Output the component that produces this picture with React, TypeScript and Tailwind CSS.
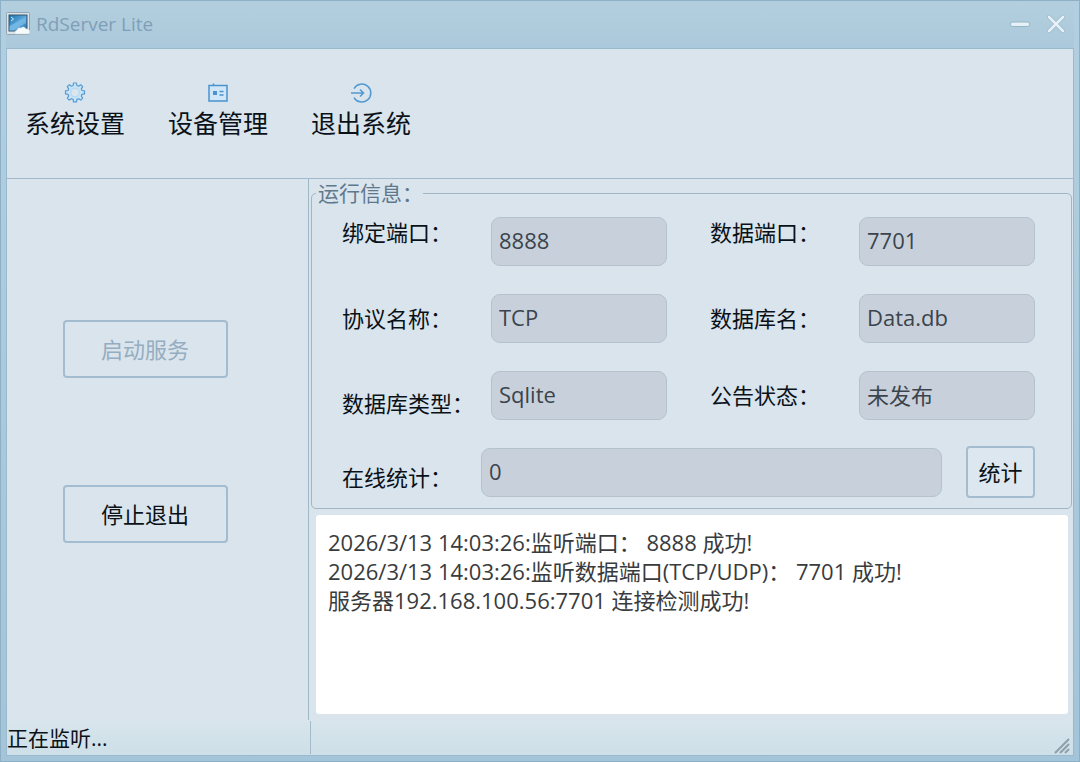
import type { ReactNode } from "react";

const ACTIONS: { label: string; icon: ReactNode }[] = [
  { label: "系统设置", icon: <GearIcon /> },
  { label: "设备管理", icon: <DeviceIcon /> },
  { label: "退出系统", icon: <ExitIcon /> },
];

const LOG = [
  "2026/3/13 14:03:26:监听端口： 8888 成功!",
  "2026/3/13 14:03:26:监听数据端口(TCP/UDP)： 7701 成功!",
  "服务器192.168.100.56:7701 连接检测成功!",
].join("\n");

function AppIcon() {
  return (
    <svg width="25" height="25" viewBox="0 0 25 25" aria-hidden="true">
      <defs>
        <linearGradient id="screen" x1="0" y1="0" x2="1" y2="1">
          <stop offset="0" stopColor="#1d6ea8" />
          <stop offset="0.5" stopColor="#58a6dc" />
          <stop offset="1" stopColor="#2473b2" />
        </linearGradient>
      </defs>
      <rect x="0.5" y="1.5" width="23" height="22" rx="1" fill="#dce4e9" stroke="#91a6b2" />
      <rect x="3" y="4" width="18" height="16" fill="url(#screen)" stroke="#34566e" />
      <path d="M3.5 15L20 6v6L8 19.500H3.500z" fill="#8cc9ef" opacity="0.55" />
      <path d="M5 6l2.500 2-2.500 2" fill="none" stroke="#d8f1ff" />
      <path d="M9 23a3 3 0 0 1 2-4 3 3 0 0 1 4-2 3 3 0 0 1 5 1 3 3 0 0 1 3 5z" fill="#f5fafc" stroke="#c2d1da" strokeWidth="0.5" />
    </svg>
  );
}

function GearIcon() {
  return (
    <svg width="22" height="22" viewBox="0 0 22 22" fill="#c9e4f7" stroke="#569bd3" strokeWidth="1.2" strokeLinejoin="round" aria-hidden="true">
      <path
        fillRule="evenodd"
        d="M9.5 1h3l.4 2.5 1.7.7 2.1-1.5 2 2-1.4 2.1.7 1.7 2.5.4v3l-2.5.4-.7 1.7 1.4 2.1-2 2-2.1-1.4-1.7.7-.4 2.5h-3l-.4-2.5-1.7-.7-2.1 1.4-2-2 1.4-2.1-.7-1.7-2.5-.4v-3l2.5-.4.7-1.7-1.4-2.1 2-2 2.1 1.5 1.7-.7z"
      />
      <circle cx="11" cy="10.5" r="4.3" fill="#dae5ed" stroke="#b5d8f0" />
    </svg>
  );
}

function DeviceIcon() {
  return (
    <svg width="22" height="22" viewBox="0 0 22 22" fill="none" stroke="#4b93ce" strokeWidth="1.5" aria-hidden="true">
      <path d="M2 3.500h18v15.500h-18z" fill="#cfe7f8" />
      <path d="M6.500 1.500v2" />
      <rect x="6" y="9" width="4" height="4" fill="#4b93ce" stroke="none" />
      <path d="M12.500 9.500h4M12.500 13h4" />
    </svg>
  );
}

function ExitIcon() {
  return (
    <svg width="22" height="22" viewBox="0 0 22 22" fill="none" stroke="#5199d2" strokeWidth="1.5" aria-hidden="true">
      <path d="M4 6.5A9 9 0 1 1 4 15.5" />
      <path d="M1 11h12.5M10 7.5l3.5 3.5-3.5 3.5" />
    </svg>
  );
}

function Field({
  id,
  label,
  value,
  align = "self-center",
}: {
  id: string;
  label: string;
  value: string;
  align?: string;
}) {
  return (
    <div className="flex min-w-0 flex-1">
      <label htmlFor={id} className={`w-[149px] shrink-0 whitespace-nowrap pb-[2px] leading-[30px] ${align}`}>
        {label}
      </label>
      <ReadOnlyInput id={id} value={value} />
    </div>
  );
}

function ReadOnlyInput({ id, value }: { id: string; value: string }) {
  return (
    <input
      id={id}
      readOnly
      value={value}
      className="h-[49px] w-full min-w-0 flex-1 rounded-[9px] border border-[#b4c2ce] bg-[#c8d1db] px-[7px] pb-1 text-[22px] text-[#3b444c] outline-none"
    />
  );
}

export default function App() {
  return (
    <div className="flex min-h-screen flex-col border border-[#8db0c6] bg-linear-to-b from-[#b1cfe0] to-[#a4c4d9] px-[5px] pb-[5px] font-['Open_Sans','Noto_Sans_CJK_SC',sans-serif] text-[22px] text-[#0b1118]">
      <header className="flex h-[47px] shrink-0 items-center bg-linear-to-b from-[#b3cfde] to-[#abc9dc] pb-[2px]">
        <AppIcon />
        <h1 className="ml-[5px] flex-1 text-[19px] leading-7 text-[#7f9fb6]">RdServer Lite</h1>
        <button type="button" aria-label="最小化" className="mr-3 flex size-6 items-center justify-center">
          <svg width="24" height="24" viewBox="0 0 24 24" aria-hidden="true">
            <rect x="2.5" y="10" width="19" height="4.5" rx="2" fill="#e5f1f7" stroke="#95b5c7" />
          </svg>
        </button>
        <button type="button" aria-label="关闭" className="mr-[6px] flex size-6 items-center justify-center">
          <svg width="24" height="24" viewBox="0 0 24 24" fill="none" strokeLinecap="round" aria-hidden="true">
            <path d="M5 5l14 14M19 5L5 19" stroke="#95b5c7" strokeWidth="4" />
            <path d="M5 5l14 14M19 5L5 19" stroke="#e5f1f7" strokeWidth="2.8" />
          </svg>
        </button>
      </header>

      <div className="flex flex-1 flex-col border border-[#9bb9cc] bg-[#d9e4ec]">
        <nav className="flex h-[130px] shrink-0 items-start gap-[43px] border-b border-[#a4b9cc] pl-[18px] pt-[33px]">
          {ACTIONS.map((a) => (
            <button key={a.label} type="button" className="flex flex-col items-center text-[25px] leading-[38px]">
              {a.icon}
              {a.label}
            </button>
          ))}
        </nav>

        <main className="flex flex-1">
          <aside className="flex w-[302px] shrink-0 flex-col items-center gap-[107px] border-r border-[#9fb7c7] pr-[25px] pt-[141px]">
            <button
              type="button"
              disabled
              className="h-[58px] w-[165px] rounded border-2 border-[#a3bccf] text-[#95adc1]"
            >
              启动服务
            </button>
            <button type="button" className="h-[58px] w-[165px] rounded border-2 border-[#a3bccf]">
              停止退出
            </button>
          </aside>

          <section className="flex min-w-0 flex-1 flex-col pl-[2px]">
            <fieldset className="mr-px flex min-w-0 flex-col gap-7 rounded-[5px] border border-[#a1b6c4] pb-[11px] pl-[30px] pr-9 pt-[10px]">
              <legend className="-ml-[26px] pl-[2px] text-[21px] leading-7 text-[#60788c]">运行信息：</legend>
              <div className="flex gap-[43px]">
                <Field id="bind-port" label="绑定端口：" value="8888" align="self-start" />
                <Field id="data-port" label="数据端口：" value="7701" align="self-start" />
              </div>
              <div className="flex gap-[43px]">
                <Field id="protocol" label="协议名称：" value="TCP" />
                <Field id="database" label="数据库名：" value="Data.db" />
              </div>
              <div className="flex gap-[43px]">
                <Field id="db-type" label="数据库类型：" value="Sqlite" align="self-end" />
                <Field id="notice" label="公告状态：" value="未发布" />
              </div>
              <div className="flex">
                <label htmlFor="online" className="w-[139px] shrink-0 self-center pt-2 leading-[30px]">
                  在线统计：
                </label>
                <ReadOnlyInput id="online" value="0" />
                <button
                  type="button"
                  className="-mb-px -mt-[2px] ml-6 w-[69px] shrink-0 rounded border-2 border-[#a3bccf] bg-[#dce7ef]"
                >
                  统计
                </button>
              </div>
            </fieldset>

            <textarea
              readOnly
              aria-label="运行日志"
              value={LOG}
              className="mx-[5px] mb-[6px] mt-[6px] min-h-[160px] flex-1 resize-none rounded-[3px] bg-white px-3 pt-[13px] text-[22px] leading-[29px] text-[#393b3d] outline-none"
            />
          </section>
        </main>

        <footer className="flex h-[35px] shrink-0 items-stretch bg-linear-to-b from-[#d8e5ec] to-[#cddfe8]">
          <output className="my-px w-[304px] shrink-0 border-r border-[#a5bac7] text-[21px] leading-[35px]">正在监听...</output>
          <svg className="ml-auto mr-[2px] self-end" width="17" height="17" viewBox="0 0 17 17" stroke="#8e9fac" strokeWidth="2" aria-hidden="true">
            <path d="M1 15L15 1M6 15l9-9M11 15l4-4" />
          </svg>
        </footer>
      </div>
    </div>
  );
}
